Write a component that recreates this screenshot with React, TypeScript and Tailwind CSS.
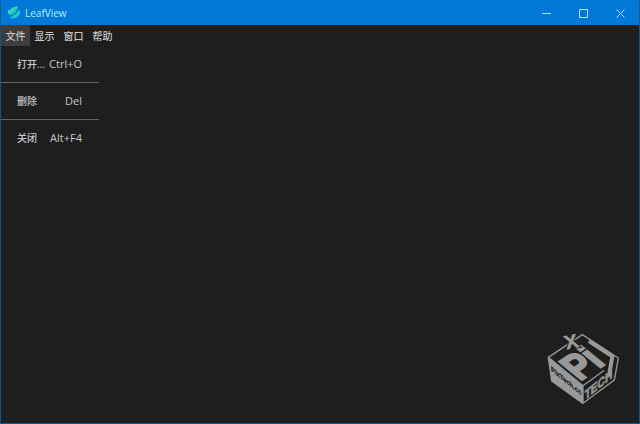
import { useState } from "react";

const menus = ["文件", "显示", "窗口", "帮助"];

const fileItems = [
  { label: "打开...", shortcut: "Ctrl+O" },
  { label: "删除", shortcut: "Del" },
  { label: "关闭", shortcut: "Alt+F4" },
];

const LeafIcon = () => {
  return (
    <svg width="14" height="14" viewBox="0 0 28 28" aria-hidden="true">
      <path
        d="M2 7 C4 10 6 9 9 5 C12 2 17 1 22 1 C20 4 20 7 18 10 C15 14 11 17 7 18 C2 16 0 11 2 7Z"
        fill="#2fdcb8"
      />
      <path
        d="M25 7 C27 12 25 19 20 22 C15 25 10 24 7 26 C6 22 9 20 13 18 C18 16 21 11 25 7Z"
        fill="#20cfd0"
      />
      <path d="M4 20 L18 6 M8 24 L20 14" stroke="#0a8fc0" strokeWidth="1.5" />
    </svg>
  );
};

const CubeLogo = () => {
  return (
    <svg
      width="72"
      height="84"
      viewBox="24 -14 216 252"
      role="img"
      aria-label="PixTech.cc"
      fontFamily="'Liberation Sans', sans-serif"
      fontWeight="bold"
    >
      <path d="M28 95 L132 180 L132 233 L38 166Z" fill="#999" />
      <path
        d="M28 95 L130 27 L238 97 L226 163 L132 233 L38 166Z M132 180 V233"
        fill="none"
        stroke="#999"
        strokeWidth="4"
        strokeLinejoin="round"
      />
      <path d="M28 95 L132 180 L196 134" fill="none" stroke="#999" strokeWidth="4" />
      <path d="M150 46 L220 92 L210 150" fill="none" stroke="#999" strokeWidth="12" />
      <text
        transform="matrix(0.8 0.65 0.1 1 37 136)"
        fontSize="22"
        fill="#1e1e1e"
        stroke="#1e1e1e"
        strokeWidth="1"
      >
        PixTech.cc
      </text>
      <g fill="#999" stroke="#999">
        <text transform="matrix(0.8 -0.65 0 1 137 223)" fontSize="38" strokeWidth="2">
          TECH
        </text>
        <text transform="matrix(0.8 -0.53 0.92 0.75 122 167)" fontSize="106" strokeWidth="6">
          Pi
        </text>
      </g>
      <text
        transform="matrix(1 -0.2 0.3 1 82 72)"
        fontSize="76"
        fill="#999"
        stroke="#1e1e1e"
        strokeWidth="6"
        paintOrder="stroke"
      >
        x
      </text>
    </svg>
  );
};

const WindowButton = ({ label, path }: { label: string; path: string }) => {
  return (
    <button aria-label={label} className="grid h-full w-[37px] place-items-center hover:bg-white/10">
      <svg width="9" height="9" viewBox="0 0 9 9" fill="none" stroke="#a8eeff">
        <path d={path} />
      </svg>
    </button>
  );
};

export default function App() {
  const [active, setActive] = useState("文件");

  return (
    <div className="flex min-h-screen flex-col border border-[#0b5590] border-t-[#0078d7] bg-[#1e1e1e] font-['Open_Sans','Noto_Sans_CJK_SC',sans-serif] text-[10px] text-[#c8c8c8]">
      <header className="flex h-6 items-center bg-[#0078d7] pl-1.5">
        <LeafIcon />
        <h1 className="ml-1 flex-1 text-[#b5efff]">LeafView</h1>
        <WindowButton label="最小化" path="M0 4.5 H9" />
        <WindowButton label="最大化" path="M0.5 0.5 H8.5 V8.5 H0.5Z" />
        <WindowButton label="关闭" path="M0.5 0.5 L8.5 8.5 M8.5 0.5 L0.5 8.5" />
      </header>
      <nav className="flex h-[21px] font-medium">
        {menus.map((menu) => (
          <button
            key={menu}
            onClick={() => setActive(menu)}
            className={`w-[29px] pt-px ${active === menu ? "bg-[#3d3d3d]" : ""}`}
          >
            {menu}
          </button>
        ))}
      </nav>
      <main className="flex flex-1 items-start justify-between">
        {active === "文件" && (
          <ul className="w-[98px] divide-y divide-[#65606a]">
            {fileItems.map((item) => (
              <li key={item.label}>
                <button className="flex h-9 w-full items-center justify-between pr-[17px] pl-4 font-medium">
                  <span>{item.label}</span>
                  <span className="text-[11px] font-normal">{item.shortcut}</span>
                </button>
              </li>
            ))}
          </ul>
        )}
        <div className="mr-5 mb-[18px] ml-auto self-end">
          <CubeLogo />
        </div>
      </main>
    </div>
  );
}
